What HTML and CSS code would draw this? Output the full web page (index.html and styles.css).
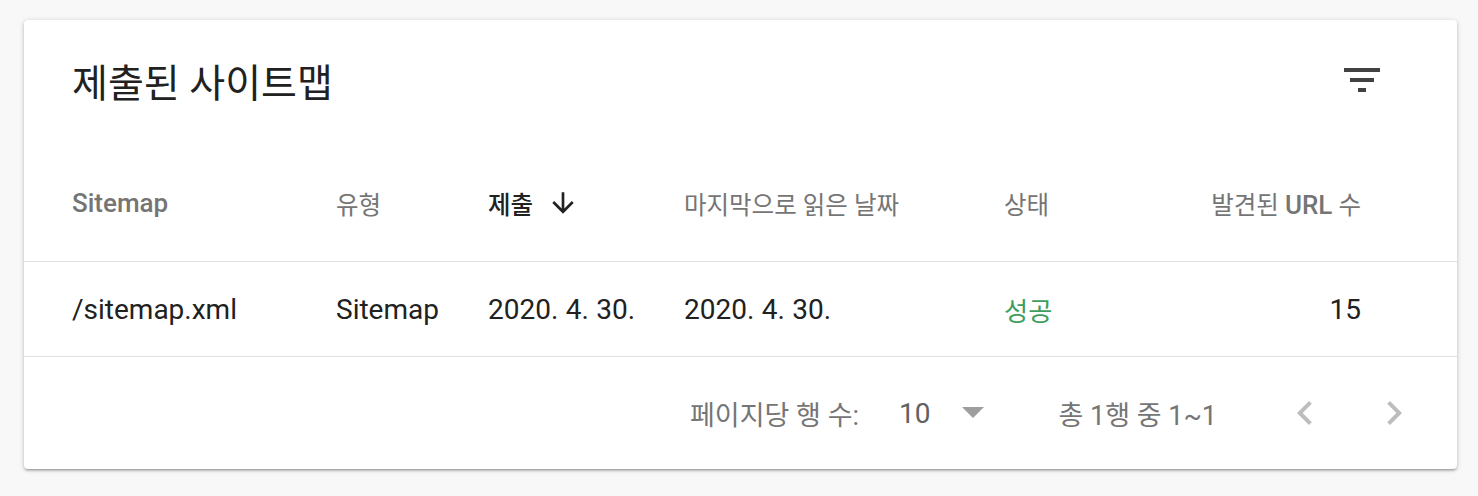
FILE: index.html
```html
<!DOCTYPE html>
<html lang="ko">
<head>
<meta charset="utf-8">
<title>제출된 사이트맵</title>
<link rel="stylesheet" href="styles.css">
</head>
<body>
<div class="card">
  <div class="card-head">
    <h1 class="title">제출된 사이트맵</h1>
    <button class="icon-btn filter-btn" aria-label="필터">
      <svg width="48" height="48" viewBox="0 0 24 24"><path d="M10 18h4v-2h-4v2zM3 6v2h18V6H3zm3 7h12v-2H6v2z" fill="#424242"/></svg>
    </button>
  </div>
  <div class="row head-row">
    <div class="cell lat">Sitemap</div>
    <div class="cell">유형</div>
    <div class="cell sorted">제출
      <svg class="sort-icon" width="32" height="32" viewBox="0 0 24 24"><path d="M20 12l-1.41-1.41L13 16.17V4h-2v12.17l-5.58-5.59L4 12l8 8 8-8z" fill="#212121"/></svg>
    </div>
    <div class="cell">마지막으로 읽은 날짜</div>
    <div class="cell">상태</div>
    <div class="cell num">발견된 <span class="lat">URL</span> 수</div>
  </div>
  <div class="row data-row">
    <div class="cell">/sitemap.xml</div>
    <div class="cell">Sitemap</div>
    <div class="cell date">2020. 4. 30.</div>
    <div class="cell date">2020. 4. 30.</div>
    <div class="cell ok">성공</div>
    <div class="cell num">15</div>
  </div>
  <div class="pager">
    <span class="pager-label">페이지당 행 수:</span>
    <span class="pager-size">10</span>
    <svg class="drop" width="24" height="12" viewBox="0 0 24 12"><path d="M1 0h22L12 11z" fill="#9e9e9e"/></svg>
    <span class="pager-range">총 1행 중 1~1</span>
    <button class="icon-btn nav-btn" aria-label="이전">
      <svg width="48" height="48" viewBox="0 0 24 24"><path d="M15.41 7.41L14 6l-6 6 6 6 1.41-1.41L10.83 12z" fill="#bdbdbd"/></svg>
    </button>
    <button class="icon-btn nav-btn" aria-label="다음">
      <svg width="48" height="48" viewBox="0 0 24 24"><path d="M10 6L8.59 7.41 13.17 12l-4.58 4.59L10 18l6-6z" fill="#bdbdbd"/></svg>
    </button>
  </div>
</div>
</body>
</html>
```
FILE: styles.css
```css
* { box-sizing: border-box; }
html, body { margin: 0; }
body {
  background: #f8f8f8;
  padding: 20px 21px 27px 24px;
  font-family: Roboto, "Noto Sans CJK KR", sans-serif;
  color: #212121;
}
.card {
  background: #fff;
  border-radius: 4px;
  height: 449px;
  box-shadow: 0 2px 2px 0 rgba(0,0,0,.14), 0 3px 1px -2px rgba(0,0,0,.12), 0 1px 5px 0 rgba(0,0,0,.2);
  display: flex;
  flex-direction: column;
}
.card-head {
  height: 125px;
  display: flex;
  justify-content: space-between;
  align-items: flex-start;
  padding: 36px 71px 0 48px;
}
.title {
  margin: 6px 0 0;
  font-size: 39px;
  line-height: 44px;
  font-weight: 400;
  color: #212121;
}
.icon-btn {
  border: 0;
  background: none;
  padding: 0;
  margin: 0;
  width: 48px;
  height: 48px;
  display: flex;
  align-items: center;
  justify-content: center;
}
.icon-btn svg { display: block; }
.row {
  display: grid;
  grid-template-columns: 264px 152px 196px 320px 1fr auto;
  align-items: center;
  padding: 0 96px 0 48px;
  border-bottom: 1px solid #e0e0e0;
}
.head-row {
  height: 117px;
  font-size: 24.5px;
  font-weight: 400;
  color: #757575;
}
.head-row .lat {
  font-size: 26px;
  font-weight: 500;
}
.sorted {
  color: #212121;
  font-weight: 500;
  display: flex;
  align-items: center;
  gap: 14px;
}
.data-row {
  height: 95px;
  font-size: 28px;
  color: #212121;
}
.date { word-spacing: 0.5px; }
.num { text-align: right; }
.ok { color: #3f9d5d; font-size: 26.3px; }
.pager {
  flex: 1;
  display: flex;
  align-items: center;
  justify-content: flex-end;
  padding-right: 39px;
  font-size: 27px;
  color: #757575;
}
.pager-label { margin-right: 40px; }
.pager-size { color: #616161; font-size: 28px; margin-right: 30px; }
.drop { display: block; margin-right: 74px; }
.pager-range { margin-right: 64px; }
.nav-btn + .nav-btn { margin-left: 41px; }
```
